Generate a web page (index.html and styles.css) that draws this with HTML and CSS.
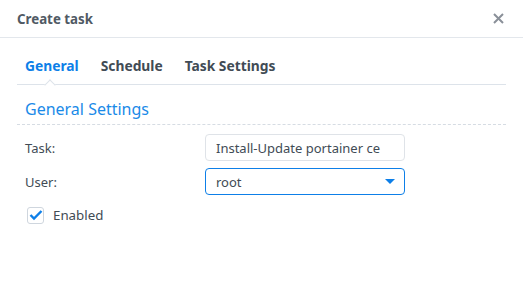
FILE: index.html
```html
<!DOCTYPE html>
<html>
<head>
<meta charset="utf-8">
<link rel="stylesheet" href="styles.css">
</head>
<body>
<div class="dialog">
  <div class="header">
    <span class="title">Create task</span>
    <span class="close">
      <svg width="11" height="11" viewBox="0 0 11 11"><path d="M1 1L10 10M10 1L1 10" stroke="#8a9099" stroke-width="2"/></svg>
    </span>
  </div>
  <div class="tabs">
    <span class="tab active">General</span>
    <span class="tab">Schedule</span>
    <span class="tab">Task Settings</span>
    <span class="notch"></span>
  </div>
  <div class="section-title">General Settings</div>
  <div class="form">
    <div class="row">
      <label class="label">Task:</label>
      <div class="input">Install-Update portainer ce</div>
    </div>
    <div class="row">
      <label class="label">User:</label>
      <div class="input select">root
        <svg class="arrow" width="10" height="6" viewBox="0 0 10 6"><path d="M0 0H10L5 5Z" fill="#0d7fe8"/></svg>
      </div>
    </div>
    <div class="check-row">
      <span class="checkbox">
        <svg width="14" height="12" viewBox="0 0 14 12"><path d="M1.5 6L5 9.5L12.5 2" fill="none" stroke="#0d7fe8" stroke-width="2.4"/></svg>
      </span>
      <span class="check-label">Enabled</span>
    </div>
  </div>
</div>
</body>
</html>
```

FILE: styles.css
```css
html, body {
  margin: 0;
  padding: 0;
  background: #fff;
}
body {
  font-family: "Noto Sans", "DejaVu Sans", sans-serif;
  color: #414b55;
  width: 523px;
  height: 282px;
  overflow: hidden;
}
.dialog {
  width: 523px;
}
.header {
  height: 38px;
  box-sizing: border-box;
  border-bottom: 1px solid #e3e7ec;
  display: flex;
  align-items: center;
  justify-content: space-between;
  padding: 0 19px 0 17px;
}
.title {
  font-size: 13.3px;
  font-weight: 700;
  color: #505a64;
}
.close {
  display: flex;
  align-items: center;
}
.tabs {
  position: relative;
  margin: 0 17px;
  height: 47px;
  box-sizing: border-box;
  border-bottom: 1px solid #dde3ea;
  display: flex;
  align-items: center;
  padding: 8px 0 0 8px;
  gap: 22px;
}
.tab {
  font-size: 13.8px;
  font-weight: 700;
  color: #414b55;
}
.tab.active {
  color: #0d7fe8;
}
.notch {
  position: absolute;
  left: 29px;
  bottom: -5px;
  width: 7px;
  height: 7px;
  background: #fff;
  border-left: 1px solid #dde3ea;
  border-top: 1px solid #dde3ea;
  transform: rotate(45deg);
}
.section-title {
  margin: 0 17px;
  padding: 13px 0 4px 8px;
  font-size: 16px;
  color: #1a8ae8;
  border-bottom: 1px dashed #d6dce3;
}
.form {
  padding: 9px 0 0 25px;
}
.row {
  display: flex;
  align-items: center;
  margin-bottom: 7px;
}
.label {
  width: 180px;
  font-size: 13px;
  color: #414b55;
}
.input {
  width: 200px;
  height: 27px;
  box-sizing: border-box;
  border: 1px solid #dfe3e8;
  border-radius: 4px;
  padding: 0 10px;
  display: flex;
  align-items: center;
  font-size: 13px;
  color: #414b55;
  white-space: nowrap;
  overflow: hidden;
}
.select {
  height: 27px;
  border-color: #0d7fe8;
  justify-content: space-between;
}
.arrow {
  margin-right: -1px;
}
.check-row {
  display: flex;
  align-items: center;
  margin-top: 11px;
  padding-left: 2px;
}
.checkbox {
  width: 17px;
  height: 17px;
  box-sizing: border-box;
  border: 1px solid #cfd6de;
  border-radius: 3px;
  display: flex;
  align-items: center;
  justify-content: center;
}
.check-label {
  margin-left: 9px;
  font-size: 13.3px;
  color: #414b55;
}
```
